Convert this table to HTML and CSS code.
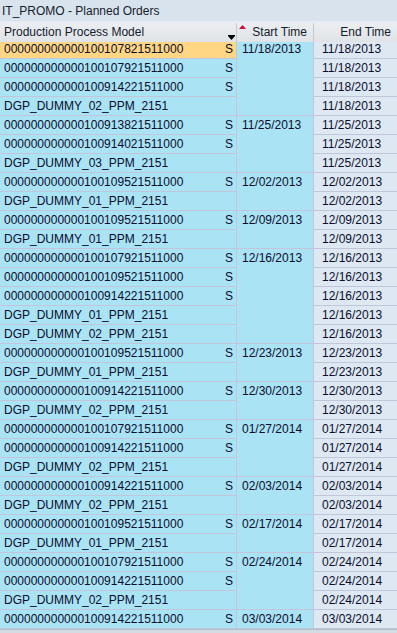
FILE: index.html
```html
<!DOCTYPE html>
<html>
<head>
<meta charset="utf-8">
<link rel="stylesheet" href="styles.css">
</head>
<body>
<div class="title">IT_PROMO - Planned Orders</div>
<div class="strip"></div>
<div class="head">
  <div class="hc h1">Production Process Model
    <svg class="filter" width="7" height="5" viewBox="0 0 7 5"><rect x="0" y="0" width="7" height="1" fill="#000"/><polygon points="0,1 7,1 3.5,5" fill="#000"/></svg>
  </div>
  <div class="hc h2"><svg class="sort" width="7" height="4" viewBox="0 0 7 4"><polygon points="0,4 7,4 3.5,0" fill="#cc1133"/></svg>Start Time</div>
  <div class="hc h3">End Time</div>
</div>
<div class="grid">
  <div class="m sel"><span>000000000000100107821511000</span><span>S</span></div><div class="st s4">11/18/2013</div><div class="et">11/18/2013</div>
  <div class="m"><span>000000000000100107921511000</span><span>S</span></div><div class="et">11/18/2013</div>
  <div class="m"><span>000000000000100914221511000</span><span>S</span></div><div class="et">11/18/2013</div>
  <div class="m"><span>DGP_DUMMY_02_PPM_2151</span></div><div class="et">11/18/2013</div>

  <div class="m"><span>000000000000100913821511000</span><span>S</span></div><div class="st s3">11/25/2013</div><div class="et">11/25/2013</div>
  <div class="m"><span>000000000000100914021511000</span><span>S</span></div><div class="et">11/25/2013</div>
  <div class="m"><span>DGP_DUMMY_03_PPM_2151</span></div><div class="et">11/25/2013</div>

  <div class="m"><span>000000000000100109521511000</span><span>S</span></div><div class="st s2">12/02/2013</div><div class="et">12/02/2013</div>
  <div class="m"><span>DGP_DUMMY_01_PPM_2151</span></div><div class="et">12/02/2013</div>

  <div class="m"><span>000000000000100109521511000</span><span>S</span></div><div class="st s2">12/09/2013</div><div class="et">12/09/2013</div>
  <div class="m"><span>DGP_DUMMY_01_PPM_2151</span></div><div class="et">12/09/2013</div>

  <div class="m"><span>000000000000100107921511000</span><span>S</span></div><div class="st s5">12/16/2013</div><div class="et">12/16/2013</div>
  <div class="m"><span>000000000000100109521511000</span><span>S</span></div><div class="et">12/16/2013</div>
  <div class="m"><span>000000000000100914221511000</span><span>S</span></div><div class="et">12/16/2013</div>
  <div class="m"><span>DGP_DUMMY_01_PPM_2151</span></div><div class="et">12/16/2013</div>
  <div class="m"><span>DGP_DUMMY_02_PPM_2151</span></div><div class="et">12/16/2013</div>

  <div class="m"><span>000000000000100109521511000</span><span>S</span></div><div class="st s2">12/23/2013</div><div class="et">12/23/2013</div>
  <div class="m"><span>DGP_DUMMY_01_PPM_2151</span></div><div class="et">12/23/2013</div>

  <div class="m"><span>000000000000100914221511000</span><span>S</span></div><div class="st s2">12/30/2013</div><div class="et">12/30/2013</div>
  <div class="m"><span>DGP_DUMMY_02_PPM_2151</span></div><div class="et">12/30/2013</div>

  <div class="m"><span>000000000000100107921511000</span><span>S</span></div><div class="st s3">01/27/2014</div><div class="et">01/27/2014</div>
  <div class="m"><span>000000000000100914221511000</span><span>S</span></div><div class="et">01/27/2014</div>
  <div class="m"><span>DGP_DUMMY_02_PPM_2151</span></div><div class="et">01/27/2014</div>

  <div class="m"><span>000000000000100914221511000</span><span>S</span></div><div class="st s2">02/03/2014</div><div class="et">02/03/2014</div>
  <div class="m"><span>DGP_DUMMY_02_PPM_2151</span></div><div class="et">02/03/2014</div>

  <div class="m"><span>000000000000100109521511000</span><span>S</span></div><div class="st s2">02/17/2014</div><div class="et">02/17/2014</div>
  <div class="m"><span>DGP_DUMMY_01_PPM_2151</span></div><div class="et">02/17/2014</div>

  <div class="m"><span>000000000000100107921511000</span><span>S</span></div><div class="st s3">02/24/2014</div><div class="et">02/24/2014</div>
  <div class="m"><span>000000000000100914221511000</span><span>S</span></div><div class="et">02/24/2014</div>
  <div class="m"><span>DGP_DUMMY_02_PPM_2151</span></div><div class="et">02/24/2014</div>

  <div class="m"><span>000000000000100914221511000</span><span>S</span></div><div class="st s1">03/03/2014</div><div class="et">03/03/2014</div>
</div>
<div class="foot"></div>
</body>
</html>
```
FILE: styles.css
```css
html, body {
  margin: 0;
  padding: 0;
  background: #dde5ec;
  font-family: "Liberation Sans", Arial, sans-serif;
  font-size: 12px;
  color: #0c0c2c;
  width: 397px;
  overflow: hidden;
}
.title {
  height: 21px;
  line-height: 22px;
  padding-left: 2px;
  background: #d9e3ed;
  color: #14202c;
}
.strip {
  height: 2px;
  background: #e6ecf2;
}
.head {
  display: grid;
  grid-template-columns: 236px 76px 1fr;
  column-gap: 1px;
  background: #c4cad1;
  height: 17px;
}
.hc {
  background: linear-gradient(#eceef1, #dfe3e7);
  line-height: 19px;
  position: relative;
  white-space: nowrap;
  color: #14202c;
}
.h1 { padding-left: 4px; }
.h2, .h3 { text-align: right; padding-right: 6px; }
.filter { position: absolute; left: 228px; top: 12px; }
.sort { position: absolute; left: 2px; top: 2px; }
.grid {
  display: grid;
  grid-template-columns: 236px 76px 1fr;
  grid-auto-rows: 18px;
  gap: 1px;
  background: #c3c6da;
  border-bottom: 1px solid #c3c6da;
}
.m {
  grid-column: 1;
  background: #a9e3f4;
  display: flex;
  justify-content: space-between;
  padding: 0 3px 0 4px;
  line-height: 19px;
  white-space: nowrap;
}
.m.sel { background: #ffd784; }
.st {
  grid-column: 2;
  background: #a9e3f4;
  padding-left: 5px;
  line-height: 19px;
}
.et {
  grid-column: 3;
  background: #dde8f2;
  padding-left: 8px;
  line-height: 19px;
}
.s1 { grid-row: span 1; }
.s2 { grid-row: span 2; }
.s3 { grid-row: span 3; }
.s4 { grid-row: span 4; }
.s5 { grid-row: span 5; }
.foot {
  height: 4px;
  border-top: 1px solid #b0bcc8;
  background: #d3dbe3;
}
```
